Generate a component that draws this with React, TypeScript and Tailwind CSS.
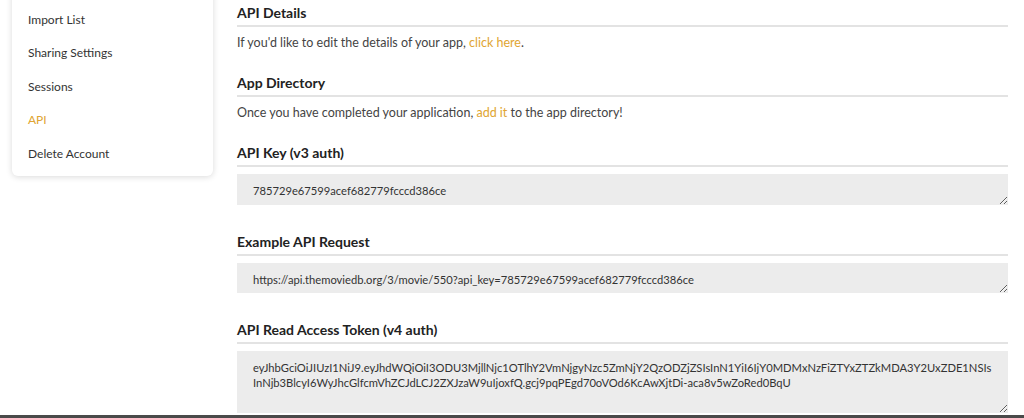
import React from "react";

const menu = ["Import List", "Sharing Settings", "Sessions", "API", "Delete Account"];

const token =
    "eyJhbGciOiJIUzI1NiJ9.eyJhdWQiOiI3ODU3MjllNjc1OTlhY2VmNjgyNzc5ZmNjY2QzODZjZSIsInN1YiI6IjY0MDMxNzFiZTYxZTZkMDA3Y2UxZDE1NSIs\nInNjb3BlcyI6WyJhcGlfcmVhZCJdLCJ2ZXJzaW9uIjoxfQ.gcj9pqPEgd70oVOd6KcAwXjtDi-aca8v5wZoRed0BqU";

function Section({ title, gap, children }: { title: string; gap: string; children: React.ReactNode }) {
    return (
        <section className={gap}>
            <h2 className="text-[14px] font-bold text-[#222] leading-[18px] pb-[3px] border-b-2 border-[#e3e3e3]">{title}</h2>
            <div className="mt-[7px]">{children}</div>
        </section>
    );
}

function KeyBox({ value, h }: { value: string; h: string }) {
    return (
        <textarea
            readOnly
            value={value}
            className={`block w-full ${h} bg-[#ececec] text-[11.2px] leading-[15px] text-[#333] pl-[16px] pr-[2px] pt-[9px] outline-none resize-y`}
        />
    );
}

export default function App() {
    return (
        <div className="w-[1024px] h-[418px] overflow-hidden bg-white font-['Lato',sans-serif] flex flex-col">
            <div className="flex flex-1 min-h-0">
                <aside className="w-[237px] shrink-0 pl-[12px] pr-[24px]">
                    <nav className="-mt-[10px] pt-[13px] bg-white rounded-b-[6px] shadow-[0_1px_6px_rgba(0,0,0,0.15)]">
                        <ul className="pl-[16px] pb-[5px] text-[12px] text-[#333]">
                            {menu.map((m) => (
                                <li key={m} className={`h-[33.5px] flex items-center ${m === "API" ? "text-[#e0a532]" : ""}`}>
                                    {m}
                                </li>
                            ))}
                        </ul>
                    </nav>
                </aside>
                <main className="flex-1 pr-[16px] pt-[4px] text-[12.5px] leading-[18px] text-[#444]">
                    <Section title="API Details" gap="mb-[22px]">
                        <p>
                            If you'd like to edit the details of your app, <a className="text-[#e0a532]">click here</a>.
                        </p>
                    </Section>
                    <Section title="App Directory" gap="mb-[22px]">
                        <p>
                            Once you have completed your application, <a className="text-[#e0a532]">add it</a> to the app directory!
                        </p>
                    </Section>
                    <Section title="API Key (v3 auth)" gap="mb-[28px]">
                        <KeyBox value="785729e67599acef682779fcccd386ce" h="h-[31px]" />
                    </Section>
                    <Section title="Example API Request" gap="mb-[28px]">
                        <KeyBox value="https://api.themoviedb.org/3/movie/550?api_key=785729e67599acef682779fcccd386ce" h="h-[30px]" />
                    </Section>
                    <Section title="API Read Access Token (v4 auth)" gap="mb-[28px]">
                        <KeyBox value={token} h="h-[62px]" />
                    </Section>
                </main>
            </div>
            <div className="h-[3px] bg-[#4a4a4a] shrink-0" />
        </div>
    );
}
